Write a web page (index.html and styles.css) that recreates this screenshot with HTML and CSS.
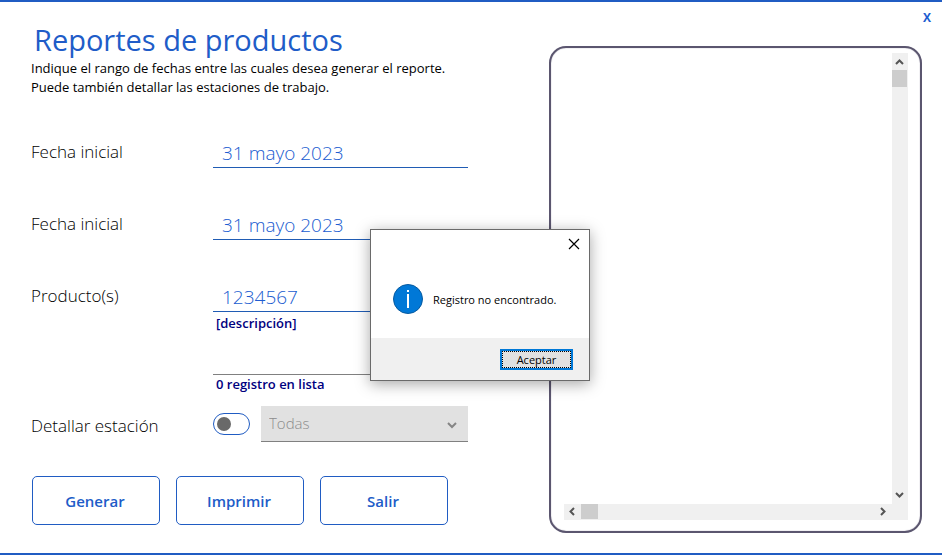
FILE: index.html
```html
<!DOCTYPE html>
<html lang="es">
<head>
<meta charset="utf-8">
<meta name="viewport" content="width=device-width, initial-scale=1">
<title>Reportes de productos</title>
<link rel="stylesheet" href="styles.css">
</head>
<body>
<div class="window">
  <header class="titlebar">
    <button class="close" type="button">X</button>
  </header>
  <main class="content">
    <form class="form">
      <h1 class="title">Reportes de productos</h1>
      <p class="intro">Indique el rango de fechas entre las cuales desea generar el reporte.<br>Puede también detallar las estaciones de trabajo.</p>

      <div class="row">
        <label class="label" for="desde">Fecha inicial</label>
        <input class="field" id="desde" type="text" value="31 mayo 2023">
      </div>
      <div class="row">
        <label class="label" for="hasta">Fecha inicial</label>
        <input class="field" id="hasta" type="text" value="31 mayo 2023">
      </div>
      <div class="row row-product">
        <label class="label" for="producto">Producto(s)</label>
        <div class="stack">
          <input class="field" id="producto" type="text" value="1234567">
          <label class="note note-tall" for="lista">[descripción]</label>
          <input class="field field-list" id="lista" type="text">
          <span class="note">0 registro en lista</span>
        </div>
      </div>
      <div class="row row-station">
        <label class="label" for="detallar">Detallar estación</label>
        <div class="station">
          <input class="switch" id="detallar" type="checkbox">
          <div class="select-box">
            <select class="select" aria-label="Estación" disabled>
              <option>Todas</option>
            </select>
            <svg class="select-arrow" viewBox="0 0 10 7"><path d="M1 1l4 4 4-4" fill="none" stroke="#858585" stroke-width="2"/></svg>
          </div>
        </div>
      </div>
      <div class="actions">
        <button class="action" type="button">Generar</button>
        <button class="action" type="button">Imprimir</button>
        <button class="action" type="button">Salir</button>
      </div>
    </form>

    <section class="panel">
      <div class="page"></div>
      <div class="bar bar-y">
        <button class="step" type="button" aria-label="Subir"><svg viewBox="0 0 16 17"><path d="M4 11l3.500-3.500 3.500 3.500" /></svg></button>
        <div class="thumb"></div>
        <button class="step step-end" type="button" aria-label="Bajar"><svg viewBox="0 0 16 17"><path d="M4 6l3.500 3.500 3.500-3.500" /></svg></button>
      </div>
      <div class="bar bar-x">
        <button class="step" type="button" aria-label="Izquierda"><svg viewBox="0 0 17 16"><path d="M10 4l-3.500 3.500 3.500 3.500" /></svg></button>
        <div class="thumb"></div>
        <button class="step step-end" type="button" aria-label="Derecha"><svg viewBox="0 0 17 16"><path d="M6 4l3.500 3.500-3.500 3.500" /></svg></button>
      </div>
      <div class="corner"></div>
    </section>
  </main>

  <div class="dialog" role="alertdialog" aria-labelledby="mensaje">
    <div class="dialog-top">
      <button class="dialog-close" type="button" aria-label="Cerrar"><svg viewBox="0 0 12 12"><path d="M1 1l10 10M11 1L1 11" fill="none" stroke="#000" stroke-width="1.200"/></svg></button>
    </div>
    <div class="dialog-body">
      <svg class="info" viewBox="0 0 30 30"><circle cx="15" cy="15" r="14.500" fill="#0078d7" stroke="#075a9f"/><path d="M14 6h2v2h-2zM14 10h2v14h-2z" fill="#fff"/></svg>
      <p class="message" id="mensaje">Registro no encontrado.</p>
    </div>
    <div class="dialog-foot">
      <button class="accept" type="button"><span class="accept-text">Aceptar</span></button>
    </div>
  </div>
</div>
</body>
</html>
```
FILE: styles.css
```css
* {
  box-sizing: border-box;
}

body {
  margin: 0;
  background: #fff;
  color: #000;
  font-family: "Open Sans", "Noto Sans", sans-serif;
}

button,
input,
select {
  margin: 0;
  font-family: inherit;
  outline: none;
}

p {
  margin: 0;
}

svg {
  display: block;
}

.window {
  position: relative;
  display: flex;
  flex-direction: column;
  min-height: 100vh;
  border-top: 2px solid #205cc3;
  border-bottom: 2px solid #205cc3;
}

.titlebar {
  display: flex;
  justify-content: flex-end;
  height: 22px;
  padding: 8px 9px 0 0;
}

.close {
  height: 16px;
  padding: 0 2px;
  border: 0;
  background: none;
  color: #205cd0;
  font-size: 12px;
  font-weight: 700;
  line-height: 16px;
}

.content {
  flex: 1;
  display: grid;
  grid-template-columns: minmax(0, 437fr) minmax(0, 373fr);
  gap: 81px;
  padding: 0 20px 20px 31px;
}

.title {
  margin: 0 0 3px;
  padding-left: 3px;
  color: #205cc8;
  font-size: 29px;
  font-weight: 400;
  line-height: 32px;
  white-space: nowrap;
}

.intro {
  margin-bottom: 35px;
  font-size: 13px;
  line-height: 19px;
  white-space: nowrap;
}

.row {
  display: grid;
  grid-template-columns: 182px minmax(0, 1fr);
  margin-bottom: 36px;
}

.row-product {
  margin-bottom: 12px;
}

.row-station {
  margin-bottom: 34px;
}

.label {
  height: 36px;
  font-size: 17px;
  font-weight: 300;
  line-height: 40px;
}

.stack {
  display: flex;
  flex-direction: column;
}

.field {
  width: 100%;
  height: 36px;
  padding: 6px 9px 0;
  border: 0;
  border-bottom: 1px solid #205cb4;
  background: none;
  color: #205cd0;
  font-size: 19px;
  font-weight: 300;
}

.field-list {
  border-bottom-color: #808080;
}

.note {
  height: 19px;
  padding-left: 3px;
  color: #000080;
  font-size: 13px;
  font-weight: 600;
  line-height: 18px;
}

.note-tall {
  height: 27px;
  line-height: 22px;
}

.station {
  display: flex;
  align-items: center;
  gap: 11px;
}

.switch {
  appearance: none;
  display: flex;
  align-items: center;
  flex: none;
  width: 37px;
  height: 22px;
  padding: 0 3px;
  border: 1px solid #205cc3;
  border-radius: 11px;
}

.switch::before {
  content: "";
  width: 14px;
  height: 14px;
  border-radius: 50%;
  background: #696969;
}

.select-box {
  position: relative;
  flex: 1;
}

.select {
  appearance: none;
  display: block;
  width: 100%;
  height: 36px;
  padding: 0 8px 2px;
  border: 0;
  border-bottom: 1px solid #808080;
  border-radius: 0;
  background: #e1e1e1;
  color: #8c8c8c;
  font-size: 15px;
  font-weight: 300;
  opacity: 1;
}

.select-arrow {
  position: absolute;
  top: 16px;
  right: 11px;
  width: 10px;
  height: 7px;
}

.actions {
  display: flex;
  gap: 16px;
  padding-left: 1px;
}

.action {
  width: 128px;
  height: 49px;
  padding: 0 2px 0 0;
  border: 1px solid #205cc3;
  border-radius: 5px;
  background: #fff;
  color: #205cc8;
  font-size: 15px;
  font-weight: 600;
}

.panel {
  display: grid;
  grid-template-columns: minmax(0, 1fr) 16px;
  grid-template-rows: minmax(0, 1fr) 16px;
  margin-top: 22px;
  padding: 5px 12px 11px 13px;
  border: 2px solid #5b566f;
  border-radius: 17px;
  box-shadow: inset 0 0 1px #77728a;
}

.bar {
  display: flex;
  background: #f0f0f0;
}

.bar-y {
  flex-direction: column;
}

.step {
  padding: 0;
  border: 0;
  background: none;
}

.step path {
  fill: none;
  stroke: #555;
  stroke-width: 2;
}

.bar-y .step {
  width: 16px;
  height: 17px;
}

.bar-x .step {
  width: 17px;
  height: 16px;
}

.bar-y .step-end {
  margin-top: auto;
}

.bar-x .step-end {
  margin-left: auto;
}

.thumb {
  background: #cdcdcd;
}

.bar-y .thumb {
  width: 15px;
  height: 17px;
}

.bar-x .thumb {
  width: 17px;
  height: 15px;
}

.corner {
  background: #f0f0f0;
}

.dialog {
  position: absolute;
  top: 227px;
  left: calc(50% - 101px);
  width: 220px;
  border: 1px solid #6a6a6a;
  background: #fff;
  box-shadow: 0 3px 14px rgba(0, 0, 0, 0.35);
}

.dialog-top {
  display: flex;
  justify-content: flex-end;
  padding: 8px 9px 0;
}

.dialog-close {
  width: 12px;
  height: 12px;
  padding: 0;
  border: 0;
  background: none;
}

.dialog-body {
  display: flex;
  align-items: center;
  gap: 10px;
  height: 88px;
  padding: 10px 22px 0;
}

.info {
  flex: none;
  width: 30px;
  height: 30px;
}

.message {
  padding-top: 2px;
  font-size: 11px;
  line-height: 16px;
  white-space: nowrap;
}

.dialog-foot {
  display: flex;
  justify-content: flex-end;
  padding: 11px 16px 10px;
  background: #f0f0f0;
}

.accept {
  width: 73px;
  height: 21px;
  padding: 0;
  border: 2px solid #0078d7;
  background: #e1e1e1;
  color: #000;
  font-size: 11px;
}

.accept-text {
  display: block;
  border: 1px dotted #000;
  line-height: 15px;
}
```
